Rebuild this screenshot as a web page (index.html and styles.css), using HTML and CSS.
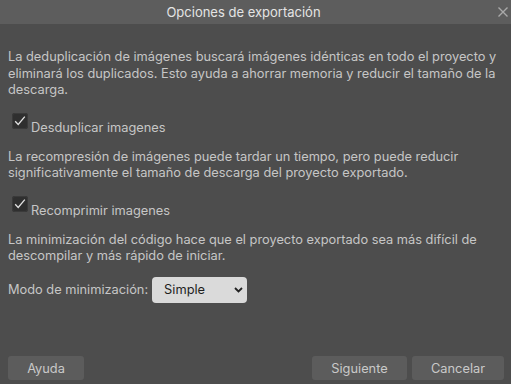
FILE: index.html
```html
<!DOCTYPE html>
<html lang="es">
<head>
    <meta charset="UTF-8">
    <meta name="viewport" content="width=device-width, initial-scale=1.0">
    <title>Opciones de exportación</title>
    <link rel="stylesheet" href="styles.css">
</head>
<body>
    <div id="dialog">
        <div class="titlebar">
            <span class="title">Opciones de exportación</span>
            <span class="close">
                <svg width="10" height="10" viewBox="0 0 10 10">
                    <path d="M0.5 0.5 L9.5 9.5 M9.5 0.5 L0.5 9.5" stroke="#a9a9a9" stroke-width="1.4" fill="none"/>
                </svg>
            </span>
        </div>

        <div class="content">
            <p class="info first">La deduplicación de imágenes buscará imágenes idénticas en todo el proyecto y eliminará los duplicados. Esto ayuda a ahorrar memoria y reducir el tamaño de la descarga.</p>
            <label class="check">
                <span class="box">
                    <svg width="16" height="16" viewBox="0 0 16 16">
                        <path d="M3.2 8.2 L6.2 11.4 L12.8 3.6" stroke="#e2e2e2" stroke-width="1.3" fill="none"/>
                    </svg>
                </span>
                <span class="check-label">Desduplicar imagenes</span>
            </label>

            <p class="info">La recompresión de imágenes puede tardar un tiempo, pero puede reducir significativamente el tamaño de descarga del proyecto exportado.</p>
            <label class="check">
                <span class="box">
                    <svg width="16" height="16" viewBox="0 0 16 16">
                        <path d="M3.2 8.2 L6.2 11.4 L12.8 3.6" stroke="#e2e2e2" stroke-width="1.3" fill="none"/>
                    </svg>
                </span>
                <span class="check-label">Recomprimir imagenes</span>
            </label>

            <p class="info">La minimización del código hace que el proyecto exportado sea más difícil de descompilar y más rápido de iniciar.</p>
            <div class="mode-row">
                <span>Modo de minimización:</span>
                <span class="select">
                    <span>Simple</span>
                    <svg width="9" height="6" viewBox="0 0 9 6">
                        <path d="M1 1 L4.5 4.5 L8 1" stroke="#222" stroke-width="1.8" fill="none"/>
                    </svg>
                </span>
            </div>
        </div>

        <div class="footer">
            <button class="btn help">Ayuda</button>
            <div class="right">
                <button class="btn next">Siguiente</button>
                <button class="btn cancel">Cancelar</button>
            </div>
        </div>
    </div>
</body>
</html>
```

FILE: styles.css
```css
body {
    margin: 0;
    font-family: Inter, "Liberation Sans", Arial, sans-serif;
    font-size: 12.8px;
    background-color: #4d4d4d;
    color: #c6c6c6;
}
#dialog {
    width: 511px;
    height: 384px;
    display: flex;
    flex-direction: column;
    overflow: hidden;
}
.titlebar {
    height: 24px;
    background-color: #5d5d5d;
    display: flex;
    align-items: center;
}
.title {
    flex: 1;
    text-align: center;
    color: #e4e4e4;
    font-size: 13px;
}
.close {
    width: 24px;
    box-sizing: border-box;
    padding-left: 11px;
    display: flex;
}
.content {
    padding: 0 8px;
}
.info {
    margin: 0;
    line-height: 16.5px;
}
.info.first {
    margin-top: 25px;
}
.check {
    display: flex;
    align-items: flex-end;
    margin: 14px 0 13px 4px;
}
.box {
    width: 16px;
    height: 16px;
    border-radius: 3px;
    background-color: #2f2f2f;
    box-shadow: inset 0 0 0 1px #3a3a3a;
    display: flex;
    margin-bottom: 7px;
}
.check-label {
    margin-left: 3px;
    line-height: 16px;
}
.mode-row {
    display: flex;
    align-items: center;
    gap: 4px;
    margin-top: 12px;
}
.select {
    width: 95px;
    height: 26px;
    box-sizing: border-box;
    background-color: #dadada;
    color: #1e1e1e;
    border-radius: 4px;
    display: flex;
    align-items: center;
    justify-content: space-between;
    padding: 0 4px 0 12px;
}
.footer {
    margin-top: auto;
    display: flex;
    justify-content: space-between;
    padding: 0 7px 4px 8px;
}
.right {
    display: flex;
    gap: 5px;
}
.btn {
    height: 24px;
    border: none;
    border-radius: 3px;
    background-color: #5c5c5c;
    color: #c9c9c9;
    font-family: inherit;
    font-size: 12.8px;
    padding: 0;
}
.help {
    width: 76px;
}
.next {
    width: 95px;
}
.cancel {
    width: 92px;
}
```
